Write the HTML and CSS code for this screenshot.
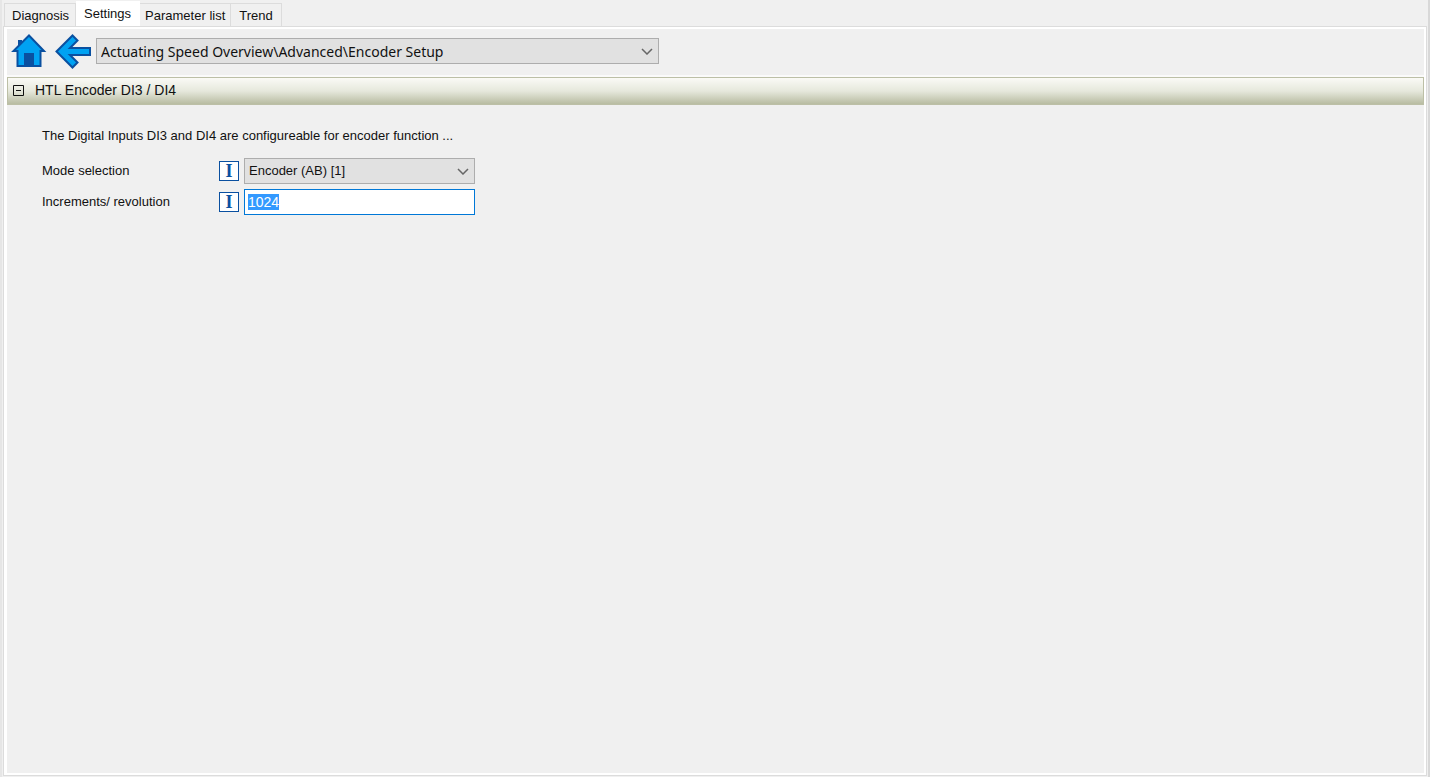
FILE: index.html
```
<!DOCTYPE html>
<html lang="en">
<head>
    <meta charset="UTF-8">
    <title>Encoder Setup</title>
    <link rel="stylesheet" href="styles.css">
</head>
<body>
<div class="window">
    <div class="tabs" role="tablist">
        <button class="tab" type="button" role="tab">Diagnosis</button>
        <button class="tab active" type="button" role="tab" aria-selected="true">Settings</button>
        <button class="tab" type="button" role="tab">Parameter list</button>
        <button class="tab" type="button" role="tab">Trend</button>
    </div>
    <main class="page">
        <div class="toolbar">
            <button class="tool" type="button" aria-label="Home">
                <svg width="36" height="36" viewBox="0 0 36 36">
                    <path d="M7 7h4v6H7z" fill="#0a50a0"/>
                    <path d="M18 2.500L33 18H29.500V33H6.500V18H2.500z" fill="#00a2f2" stroke="#0a50a0" stroke-width="2"/>
                    <path d="M13 20h10v13H13z" fill="#0a50a0"/>
                </svg>
            </button>
            <button class="tool" type="button" aria-label="Back">
                <svg width="36" height="36" viewBox="0 0 36 36">
                    <path d="M1.500 18.500L17.500 2.500l5 5-7.500 7.500H35v7H15l7.500 7.500-5 5z" fill="#00a2f2" stroke="#0a50a0" stroke-width="2"/>
                </svg>
            </button>
            <div class="combo path">
                <select aria-label="Page">
                    <option>Actuating Speed Overview\Advanced\Encoder Setup</option>
                </select>
                <svg class="chevron" width="12" height="8" viewBox="0 0 12 8"><path d="M1 2l5 5 5-5"/></svg>
            </div>
        </div>
        <section class="group">
            <h2 class="group-head">
                <button class="toggle" type="button" aria-expanded="true" aria-label="Collapse">
                    <svg width="11" height="11" viewBox="0 0 11 11"><path d="M.5.500h10v10H.5zM3 5.500h5"/></svg>
                </button>
                <span>HTL Encoder DI3 / DI4</span>
            </h2>
            <div class="group-body">
                <p>The Digital Inputs DI3 and DI4 are configureable for encoder function ...</p>
                <div class="row">
                    <label for="mode">Mode selection</label>
                    <span class="info">I</span>
                    <div class="combo">
                        <select id="mode">
                            <option>Encoder (AB) [1]</option>
                        </select>
                        <svg class="chevron" width="12" height="8" viewBox="0 0 12 8"><path d="M1 2l5 5 5-5"/></svg>
                    </div>
                </div>
                <div class="row">
                    <label for="increments">Increments/ revolution</label>
                    <span class="info">I</span>
                    <input id="increments" type="text" value="1024">
                </div>
            </div>
        </section>
    </main>
</div>
<script>
    document.getElementById('increments').select();
</script>
</body>
</html>
```
FILE: styles.css
```
* {
    box-sizing: border-box;
    margin: 0;
    padding: 0;
}
body {
    background: #f0f0f0;
    color: #111;
    font: 13px/20px "Liberation Sans", Arial, sans-serif;
}
button, select, input {
    font: inherit;
    color: inherit;
}
.window {
    display: flex;
    flex-direction: column;
    min-height: 100vh;
    padding: 1px;
    border-right: 2px solid #d8d8d8;
    border-left: 2px solid #e6e6e6;
}
/* tabs */
.tabs {
    display: flex;
    align-items: flex-end;
    padding-left: 1px;
}
.tab {
    height: 23px;
    padding: 2px 5px 0;
    background: #f0f0f0;
    border: 1px solid #dcdcdc;
    border-bottom: none;
    border-left: none;
}
.tab:first-child {
    padding: 2px 6px 0 7px;
    border-left: 1px solid #dcdcdc;
}
.tab:last-child {
    padding: 2px 8px 0;
}
.tab.active {
    height: 25px;
    padding: 0 8px;
    background: #fff;
    border-color: #fff;
}
/* page */
.page {
    flex: 1;
    padding: 0 2px 2px 3px;
    border: 1px solid #dcdcdc;
    box-shadow: inset 3px 0 #fff, inset 0 2px #fff, inset -2px -2px #fff;
}
.toolbar {
    display: flex;
    align-items: center;
    gap: 8px;
    height: 50px;
    padding: 0 4px;
    border-bottom: 2px solid #fafafa;
}
.tool {
    display: flex;
    background: none;
    border: none;
}
.combo {
    display: flex;
    align-items: center;
    width: 231px;
    height: 26px;
}
.combo select {
    width: 100%;
    height: 100%;
    padding: 0 24px 0 4px;
    appearance: none;
    background: #e1e1e1;
    border: 1px solid #adadad;
    border-radius: 0;
}
.chevron {
    flex: none;
    margin-left: -18px;
    margin-right: 6px;
    fill: none;
    stroke: #666;
    stroke-width: 1.5;
    pointer-events: none;
}
.path {
    width: 563px;
    margin-left: -3px;
    font: 14px/20px "Noto Sans", "Segoe UI", sans-serif;
}
.path select {
    padding-top: 2px;
}
/* group */
.group-head {
    display: flex;
    align-items: center;
    gap: 11px;
    height: 28px;
    padding: 0 5px 2px;
    background: linear-gradient(#fafaf6, #e6e8dc 50%, #b8bca2);
    border: 1px solid #bcbfa6;
    font-size: 14px;
    font-weight: normal;
}
.toggle {
    display: flex;
    background: none;
    border: none;
}
.toggle svg {
    fill: none;
    stroke: #111;
}
.group-body {
    display: flex;
    flex-direction: column;
    gap: 5px;
    padding: 21px 35px;
}
.group-body p {
    margin-bottom: 7px;
}
.row {
    display: flex;
    align-items: center;
}
.row label {
    width: 177px;
}
.info {
    width: 20px;
    height: 20px;
    margin-right: 5px;
    background: #fff;
    border: 1px solid #0a50a0;
    color: #0a50a0;
    font: bold 18px/18px "Liberation Serif", "Times New Roman", serif;
    text-align: center;
}
.row input {
    width: 231px;
    height: 26px;
    padding: 0 3px;
    background: #fff;
    border: 1px solid #0078d7;
    outline: none;
    font-size: 14px;
}
.row input::selection {
    background: #3399ff;
    color: #fff;
}
```
